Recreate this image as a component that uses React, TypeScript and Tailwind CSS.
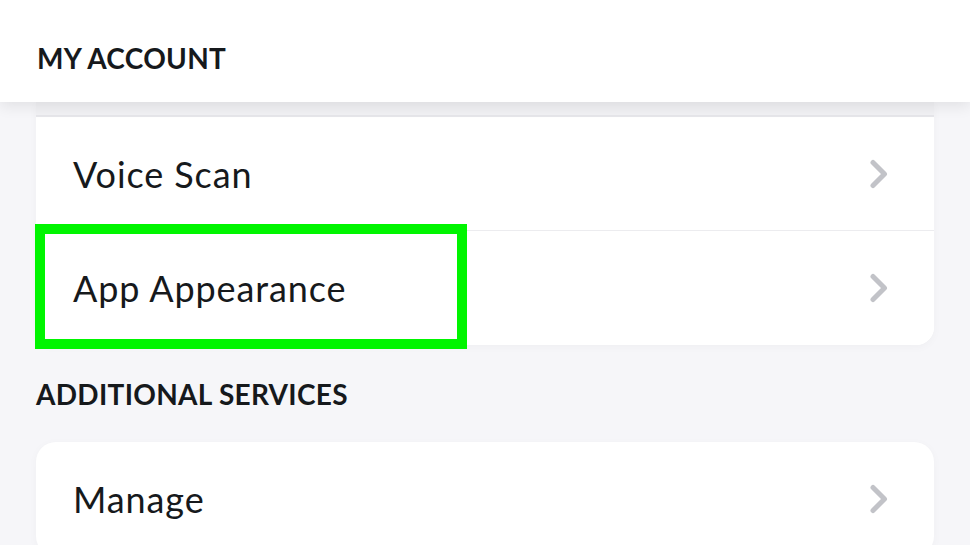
import React from 'react';

const Chevron = () => (
  <svg width="22" height="30" viewBox="0 0 22 30" fill="none" className="shrink-0">
    <path d="M5 3.5 L16.5 15 L5 26.5" stroke="#c2c3c8" strokeWidth="5" strokeLinecap="round" strokeLinejoin="round" />
  </svg>
);

const Row = ({ label, border = true, rounded = '' }: { label: string; border?: boolean; rounded?: string }) => (
  <div className={`flex items-center justify-between h-[114px] pl-[37px] pr-[44px] bg-white ${border ? 'border-b border-[#ececef]' : ''} ${rounded}`}>
    <span className="text-[36px] text-[#16191c] tracking-[0.9px]">{label}</span>
    <Chevron />
  </div>
);

export default function App() {
  return (
    <div className="w-[970px] h-[545px] overflow-hidden bg-[#f6f6f9] relative" style={{ fontFamily: 'Lato, "Open Sans", sans-serif' }}>
      <header className="relative z-10 h-[102px] bg-white flex items-center px-[37px] shadow-[0_4px_14px_rgba(0,0,0,0.09)]">
        <h1 className="text-[28px] font-bold text-[#16191c] tracking-[0.3px] pt-[14px]">MY ACCOUNT</h1>
      </header>

      <div className="mx-[36px]">
        <div className="relative bg-white rounded-b-[18px] shadow-[0_2px_10px_rgba(0,0,0,0.03)]">
          <div className="h-[15px] bg-[#f1f1f4] border-b-2 border-[#e6e6ea]" />
          <Row label="Voice Scan" />
          <Row label="App Appearance" border={false} rounded="rounded-b-[18px]" />
          <div className="absolute left-[-1px] top-[122px] w-[432px] h-[125px] border-[10px] border-[#00f500]" />
        </div>

        <h2 className="mt-[32px] text-[28px] font-bold text-[#16191c] tracking-[0.3px] leading-[34px]">ADDITIONAL SERVICES</h2>

        <div className="mt-[31px] bg-white rounded-[20px] shadow-[0_2px_10px_rgba(0,0,0,0.03)]">
          <div className="flex items-center justify-between h-[114px] pl-[37px] pr-[44px]">
            <span className="text-[36px] text-[#16191c] tracking-[0.9px]">Manage</span>
            <Chevron />
          </div>
        </div>
      </div>
    </div>
  );
}
